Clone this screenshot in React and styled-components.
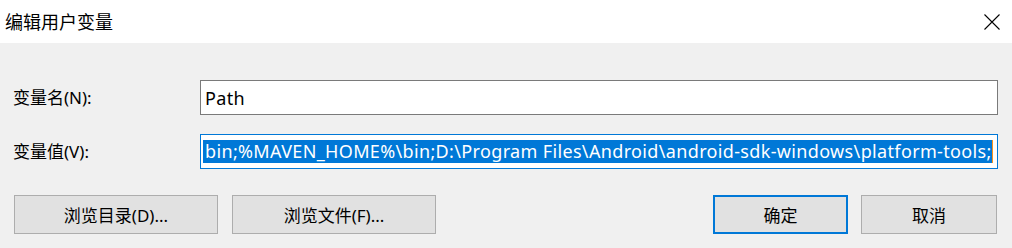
import React from "react";
import styled, { createGlobalStyle } from "styled-components";

const Global = createGlobalStyle`
  html, body { margin: 0; padding: 0; }
  body {
    background: #f0f0f0;
    font-family: "Noto Sans", "Noto Sans CJK SC", sans-serif;
    color: #000;
  }
`;

const Dialog = styled.div`
  width: 1012px;
  height: 248px;
  background: #f0f0f0;
  display: flex;
  flex-direction: column;
  overflow: hidden;
`;

const TitleBar = styled.div`
  height: 43px;
  background: #ffffff;
  display: flex;
  align-items: center;
  justify-content: space-between;
  padding-left: 5px;
  box-sizing: border-box;
`;

const Title = styled.div`
  font-family: "Noto Sans CJK SC", sans-serif;
  font-size: 18px;
  line-height: 1;
  margin-top: -1px;
`;

const CloseButton = styled.div`
  width: 40px;
  height: 43px;
  display: flex;
  align-items: center;
  justify-content: center;
`;

const Form = styled.div`
  display: grid;
  grid-template-columns: 187px 798px;
  row-gap: 19px;
  padding: 37px 14px 0 13px;
  align-items: center;
`;

const Label = styled.div`
  font-family: "Noto Sans", "Noto Sans CJK SC", sans-serif;
  font-size: 17px;
  line-height: 1;
`;

const Field = styled.div`
  height: 35px;
  box-sizing: border-box;
  background: #fff;
  border: 1px solid ${(p) => (p.$focused ? "#0078d7" : "#7a7a7a")};
  display: flex;
  align-items: center;
  padding-left: 4px;
  overflow: hidden;
  white-space: nowrap;
  font-family: "Noto Sans", sans-serif;
  font-size: 18px;
  letter-spacing: 0.35px;
`;

const Selected = styled.span`
  background: #0078d7;
  color: #fff;
  line-height: 23px;
  height: 23px;
  display: inline-block;
  padding-left: 2px;
  margin-left: -2px;
`;

const Caret = styled.span`
  display: inline-block;
  width: 1px;
  height: 23px;
  background: #f7931e;
`;

const ButtonRow = styled.div`
  display: flex;
  align-items: center;
  padding: 26px 15px 0 14px;
`;

const Button = styled.div`
  width: ${(p) => p.$w}px;
  height: 39px;
  box-sizing: border-box;
  background: #e1e1e1;
  border: ${(p) => (p.$default ? "2px solid #0078d7" : "1px solid #adadad")};
  display: flex;
  align-items: center;
  justify-content: center;
  font-family: "Noto Sans", "Noto Sans CJK SC", sans-serif;
  font-size: 17px;
  margin-right: ${(p) => p.$mr || 0}px;
`;

const Spacer = styled.div`
  flex: 1;
`;

export default function App() {
  return (
    <Dialog>
      <Global />
      <TitleBar>
        <Title>编辑用户变量</Title>
        <CloseButton>
          <svg width="16" height="16" viewBox="0 0 16 16">
            <path d="M0.5 0.5 L15.5 15.5 M15.5 0.5 L0.5 15.5" stroke="#000" strokeWidth="1.1" fill="none" />
          </svg>
        </CloseButton>
      </TitleBar>
      <Form>
        <Label>变量名(N):</Label>
        <Field>Path</Field>
        <Label>变量值(V):</Label>
        <Field $focused>
          <Selected>bin;%MAVEN_HOME%\bin;D:\Program Files\Android\android-sdk-windows\platform-tools;</Selected>
          <Caret />
        </Field>
      </Form>
      <ButtonRow>
        <Button $w={204} $mr={14}>浏览目录(D)...</Button>
        <Button $w={204}>浏览文件(F)...</Button>
        <Spacer />
        <Button $w={135} $mr={13} $default>确定</Button>
        <Button $w={136}>取消</Button>
      </ButtonRow>
    </Dialog>
  );
}
